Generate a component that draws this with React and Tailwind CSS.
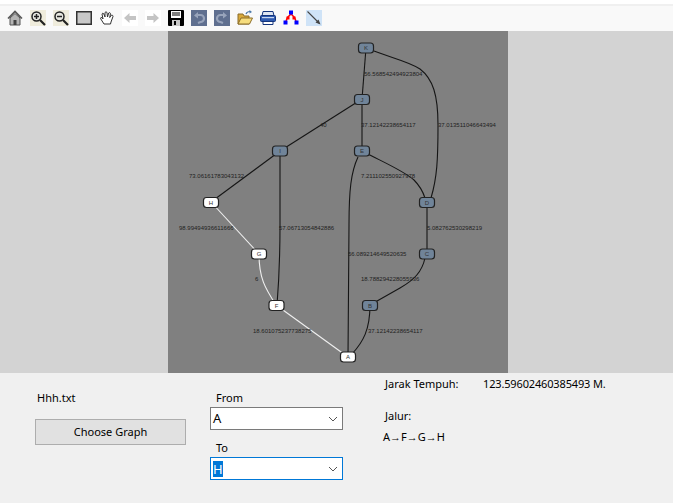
import React from "react";

/* --------------------------------------
      GRAPH DATA
-------------------------------------- */
const nodes = [
  { id: "K", x: 366, y: 48 },
  { id: "J", x: 362, y: 99.5 },
  { id: "I", x: 280, y: 151 },
  { id: "E", x: 362, y: 151 },
  { id: "H", x: 211, y: 202.5, path: true },
  { id: "D", x: 427, y: 202.5 },
  { id: "G", x: 259, y: 254, path: true },
  { id: "C", x: 427, y: 254 },
  { id: "F", x: 276.5, y: 305.5, path: true },
  { id: "B", x: 370, y: 305.5 },
  { id: "A", x: 348, y: 357, path: true },
];

const edges = [
  { d: "M366 48 L362 99" },
  { d: "M374 51 C392 58 410 62 420 69 C433 79 438 95 438 125 C438 160 437 178 431 198" },
  { d: "M362 99 L280 151" },
  { d: "M362 99 L362 151" },
  { d: "M280 151 L211 202" },
  { d: "M280 151 L280 225 C280 262 279 280 277 305" },
  { d: "M362 151 C385 163 404 171 414 180 C420 186 423 192 425 198" },
  { d: "M358 157 C351 172 349 190 349 225 L348 357" },
  { d: "M427 202 L427 254" },
  { d: "M425 258 C422 272 414 280 400 288 L370 305" },
  { d: "M370 305 C370 330 363 342 352 354" },
  { d: "M211 202 L259 254", path: true },
  { d: "M259 254 C259 278 265 288 276 305", path: true },
  { d: "M276 305 L348 357", path: true },
];

const labels = [
  ["56.568542494923804", 364, 75.5],
  ["37.12142238654117", 361, 127],
  ["37.013511046643494", 438, 127],
  ["40", 320, 127],
  ["73.06161783043132", 189, 178],
  ["7.211102550927978", 361, 178],
  ["98.99494936611666", 179, 230],
  ["57.06713054842886", 279, 230],
  ["5.082762530298219", 427, 230],
  ["56.089214649520635", 348, 256],
  ["6", 255, 281],
  ["18.788294228055936", 361, 281],
  ["18.601075237738275", 253, 333],
  ["37.12142238654117", 368, 333],
];

/* --------------------------------------
      TOOLBAR ICONS
-------------------------------------- */
const Icon = ({ bg, children }) => (
  <svg width="16" height="16" viewBox="0 0 16 16" className="shrink-0" style={bg ? { background: bg } : undefined}>
    {children}
  </svg>
);

const HomeIcon = () => (
  <Icon>
    <path d="M1 8.5 L8 1.5 L15 8.5" fill="none" stroke="#555" strokeWidth="1.6" />
    <path d="M3 8 L8 3.5 L13 8 V15 H3 Z" fill="#b5b5b5" stroke="#555" />
    <rect x="6.5" y="10" width="3" height="5" fill="#444" />
  </Icon>
);

const ZoomIcon = ({ plus }) => (
  <Icon bg="#efecdc">
    <circle cx="6.5" cy="6.5" r="4.5" fill="#e8e8e0" stroke="#222" strokeWidth="1.5" />
    <path d="M4 6.5 H9" stroke="#222" strokeWidth="1.5" />
    {plus && <path d="M6.5 4 V9" stroke="#222" strokeWidth="1.5" />}
    <path d="M10 10 L15 15" stroke="#222" strokeWidth="2.2" />
  </Icon>
);

const SquareIcon = () => (
  <Icon>
    <rect x="0.75" y="1.75" width="14.5" height="12.5" fill="#c8c8c8" stroke="#333" strokeWidth="1.5" />
  </Icon>
);

const HandIcon = () => (
  <Icon>
    <path
      d="M5 14 L1.5 8.5 Q1.5 7 3.2 7.8 L4 9 L3 4 Q3.5 2.5 4.8 3.8 L6 7 L6 2.5 Q7 1 8 2.5 L8.5 7 L9.7 3 Q11 2 11.5 3.5 L10.7 7.5 L12.5 5 Q14 5 14 6.5 L12 12 L11.5 14 Z"
      fill="#fff"
      stroke="#333"
      strokeWidth="1"
    />
  </Icon>
);

const ArrowIcon = ({ left }) => (
  <Icon bg="#fff">
    <path
      d={left ? "M2 8 L7.5 3 V6 H14 V10 H7.5 V13 Z" : "M14 8 L8.5 3 V6 H2 V10 H8.5 V13 Z"}
      fill="#c4c4c4"
    />
  </Icon>
);

const SaveIcon = () => (
  <Icon>
    <path d="M0 1 Q0 0 1 0 H15 Q16 0 16 1 V15 Q16 16 15 16 H1 Q0 16 0 15 Z" fill="#000" />
    <rect x="3" y="1" width="10" height="7" fill="#fff" />
    <path d="M4 3 H12 M4 5 H12" stroke="#000" />
    <rect x="4" y="10" width="8" height="6" fill="#c8c8c8" />
    <rect x="6" y="11" width="2" height="4" fill="#000" />
  </Icon>
);

const UndoIcon = ({ redo }) => (
  <Icon bg="#5f6f8f">
    <g transform={redo ? "translate(16 0) scale(-1 1)" : undefined}>
      <path d="M5 5 H9.5 A3.5 3.5 0 0 1 9.5 12 L7 13" fill="none" stroke="#98a4bb" strokeWidth="2.2" />
      <path d="M7 2 L3 5.5 L7 8.5 Z" fill="#98a4bb" />
    </g>
  </Icon>
);

const OpenIcon = () => (
  <Icon>
    <path d="M1 4 H6 L7 6 H12 V14 H1 Z" fill="#d9a93a" stroke="#8a6d2a" />
    <path d="M1 14 L4 8 H15.5 L12.5 14 Z" fill="#f6dd7e" stroke="#8a6d2a" />
    <path d="M9 4 Q10 1.5 13 1.5" fill="none" stroke="#4a78a8" strokeWidth="1.2" />
    <path d="M12.5 0 L15 2 L12.5 3.5 Z" fill="#4a78a8" />
  </Icon>
);

const PrintIcon = () => (
  <Icon>
    <path d="M3 1.5 H13 L14 6 H2 Z" fill="#dfe6f2" stroke="#14347c" />
    <rect x="0.5" y="5.5" width="15" height="6" rx="1" fill="#2f5bb0" stroke="#14347c" />
    <rect x="2" y="7" width="12" height="1.2" fill="#c8d6f0" />
    <path d="M3 11.5 H13 V14.5 H3 Z" fill="#fff" stroke="#14347c" />
  </Icon>
);

const GraphIcon = () => (
  <Icon>
    <path d="M8 4 L4.5 7.5 L3 11 M8 4 L11.5 7.5 L13 11" fill="none" stroke="#f00" strokeWidth="1.4" />
    <rect x="3.5" y="6.5" width="3" height="3" fill="#f00" />
    <rect x="9.5" y="6.5" width="3" height="3" fill="#f00" />
    <rect x="6" y="0.5" width="4" height="4" fill="#00f" />
    <rect x="0.5" y="10.5" width="4" height="4" fill="#00f" />
    <rect x="11.5" y="10.5" width="4" height="4" fill="#00f" />
  </Icon>
);

const EdgeIcon = () => (
  <Icon bg="#cfe3f7">
    <path d="M1.5 1.5 L13 13" stroke="#444" strokeWidth="1.1" />
    <path d="M14.5 14.5 L9.5 12.5 L12.5 9.5 Z" fill="#444" />
  </Icon>
);

const Chevron = () => (
  <svg width="10" height="6" viewBox="0 0 10 6" className="shrink-0">
    <path d="M1 1 L5 5 L9 1" fill="none" stroke="#555" strokeWidth="1" />
  </svg>
);

const App = () => {
  return (
    <div
      className="w-[673px] h-[503px] flex flex-col overflow-hidden bg-[#f0f0f0] text-[11px] text-black"
      style={{ fontFamily: '"Noto Sans", "Open Sans", sans-serif' }}
    >
      {/* Toolbar */}
      <div className="h-[31px] shrink-0 bg-[#f9f9f9] border-t-[4px] border-white">
        <div className="h-[2px] bg-[#f0f0f0]" />
        <div className="flex items-center gap-[7px] pl-[7px] pt-[4px]">
          <HomeIcon />
          <ZoomIcon plus />
          <ZoomIcon />
          <SquareIcon />
          <HandIcon />
          <ArrowIcon left />
          <ArrowIcon />
          <SaveIcon />
          <UndoIcon />
          <UndoIcon redo />
          <OpenIcon />
          <PrintIcon />
          <GraphIcon />
          <EdgeIcon />
        </div>
      </div>

      {/* Graph */}
      <div className="h-[342px] shrink-0 bg-[#d3d3d3] pl-[168px]">
        <svg
          width="340"
          height="342"
          viewBox="168 31 340 342"
          className="block bg-[#808080]"
          style={{ fontFamily: '"Liberation Sans", sans-serif' }}
        >
          {edges.map((e, i) => (
            <path key={i} d={e.d} fill="none" stroke={e.path ? "#f0f0f0" : "#151515"} strokeWidth="1.1" />
          ))}
          {labels.map(([text, x, y], i) => (
            <text key={i} x={x} y={y} fontSize="6" fill="#222">
              {text}
            </text>
          ))}
          {nodes.map((n) => (
            <g key={n.id}>
              <rect
                x={n.x - 7.5}
                y={n.y - 5}
                width="15"
                height="10"
                rx="3"
                fill={n.path ? "#fff" : "#708499"}
                stroke="#222"
                strokeWidth="1.2"
              />
              <text x={n.x} y={n.y + 2} fontSize="6" textAnchor="middle" fill="#333">
                {n.id}
              </text>
            </g>
          ))}
        </svg>
      </div>

      {/* Controls */}
      <div className="flex-1 flex items-start">
        <div className="w-[151px] ml-[35px] mr-[24px] pt-[16px]">
          <div className="pl-[2px] h-[18px] leading-[18px]">Hhh.txt</div>
          <button className="mt-[12px] w-full h-[26px] bg-[#e1e1e1] border border-[#adadad] text-center">
            Choose Graph
          </button>
        </div>

        <div className="w-[133px] pt-[16px]">
          <div className="pl-[6px] h-[18px] leading-[18px]">From</div>
          <div className="h-[23px] bg-white border border-[#7a7a7a] flex items-center justify-between pl-[2px] pr-[4px] text-[13px]">
            <span>A</span>
            <Chevron />
          </div>
          <div className="mt-[9px] pl-[6px] h-[18px] leading-[18px]">To</div>
          <div className="h-[23px] bg-white border border-[#0078d7] flex items-center justify-between pl-[2px] pr-[4px] text-[13px]">
            <span className="bg-[#0078d7] text-white leading-[16px]">H</span>
            <Chevron />
          </div>
        </div>

        <div className="ml-[40px] pt-[2px]">
          <div className="pl-[2px] flex h-[18px] leading-[18px]">
            <span className="w-[98px]">Jarak Tempuh:</span>
            <span className="tracking-[-0.15px]">123.59602460385493 M.</span>
          </div>
          <div className="pl-[2px] mt-[14px] h-[18px] leading-[18px]">Jalur:</div>
          <div className="mt-[3px] h-[18px] leading-[18px]">A→F→G→H</div>
        </div>
      </div>
    </div>
  );
};

export default App;
